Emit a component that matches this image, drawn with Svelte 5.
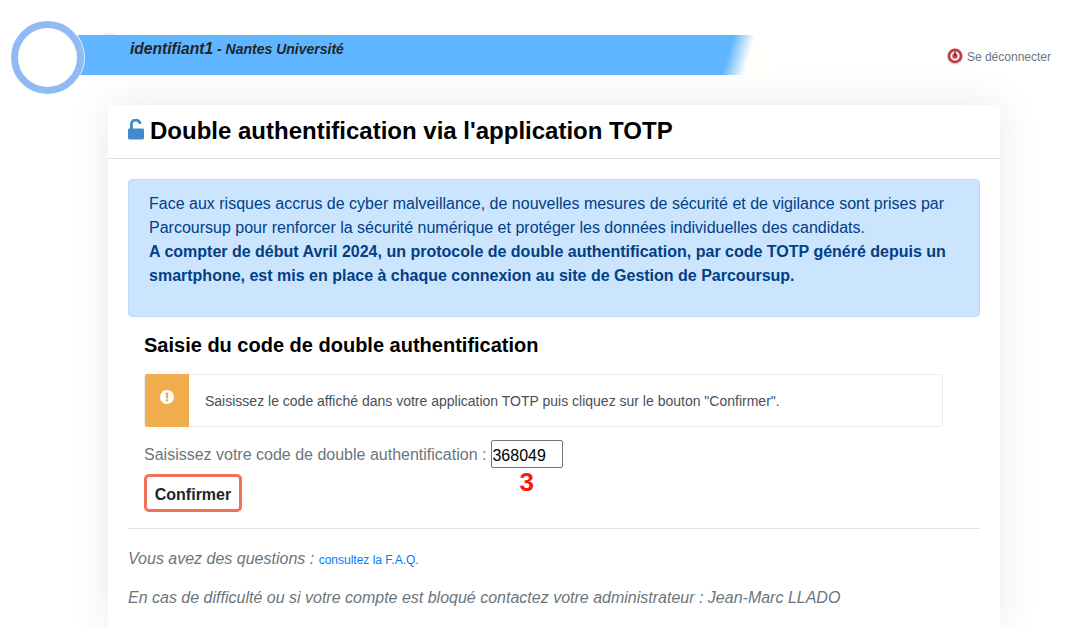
<script lang="ts">
  // TOTP double authentication page
  let code = $state('368049');
</script>

<header class="topbar">
  <div class="bump"></div>
  <div class="logo"></div>
  <div class="banner">
    <span class="ident"><em class="login">identifiant1</em> - Nantes Université</span>
  </div>
  <a class="logout" href="#top">
    <svg width="16" height="17" viewBox="0 0 16 17">
      <circle cx="8" cy="8.6" r="7.9" fill="#d8d2d2" />
      <circle cx="8" cy="7.9" r="7.3" fill="#bd3a3e" />
      <circle cx="8" cy="8" r="3.7" fill="#c9484c" stroke="#fbf0f0" stroke-width="2" />
      <path d="M8 3.4v4.8" stroke="#8f1a1f" stroke-width="1.6" />
    </svg>
    Se déconnecter
  </a>
</header>

<main class="card">
  <div class="card-head">
    <h1>
      <svg class="lock" width="16" height="21" viewBox="0 0 16 21">
        <path d="M3.4 10V5.4a4.4 4.1 0 0 1 8.8-.6" fill="none" stroke="#428bca" stroke-width="2.8" />
        <rect x="0" y="9.6" width="16" height="10.8" rx="1.3" fill="#428bca" />
      </svg>
      Double authentification via l'application TOTP
    </h1>
  </div>
  <div class="card-body">
    <div class="alert">
      Face aux risques accrus de cyber malveillance, de nouvelles mesures de sécurité et de vigilance sont prises par Parcoursup pour renforcer la sécurité numérique et protéger les données individuelles des candidats.<br />
      <strong>A compter de début Avril 2024, un protocole de double authentification, par code TOTP généré depuis un smartphone, est mis en place à chaque connexion au site de Gestion de Parcoursup.</strong>
    </div>

    <section class="saisie">
      <h2>Saisie du code de double authentification</h2>
      <div class="callout">
        <div class="callout-icon">
          <svg width="14" height="14" viewBox="0 0 14 14">
            <circle cx="7" cy="7" r="7" fill="#fff" />
            <rect x="5.8" y="2.6" width="2.4" height="5.8" rx="0.6" fill="#f0ad4e" />
            <rect x="5.8" y="9.4" width="2.4" height="2.1" fill="#f0ad4e" />
          </svg>
        </div>
        <p>Saisissez le code affiché dans votre application TOTP puis cliquez sur le bouton "Confirmer".</p>
      </div>
      <div class="code-row">
        <label for="code">Saisissez votre code de double authentification :</label>
        <span class="code-wrap">
          <input id="code" type="text" bind:value={code} />
          <span class="step">3</span>
        </span>
      </div>
      <button type="button" class="confirm">Confirmer</button>
    </section>

    <hr />

    <p class="help first">Vous avez des questions : <a href="#top">consultez la F.A.Q.</a></p>
    <p class="help">En cas de difficulté ou si votre compte est bloqué contactez votre administrateur : Jean-Marc LLADO</p>
  </div>
</main>

<style>
  :global(body) {
    margin: 0;
    background: #fff;
    font-family: "Liberation Sans", Arial, sans-serif;
    height: 628px;
    overflow: hidden;
  }

  .topbar {
    position: relative;
    height: 105px;
    box-sizing: border-box;
    padding-top: 35px;
    display: flex;
    align-items: flex-start;
  }

  .bump {
    position: absolute;
    left: 102px;
    top: 33px;
    width: 16px;
    height: 6px;
    border-radius: 50%;
    background: #e6effa;
  }

  .logo {
    position: absolute;
    left: 11px;
    top: 21px;
    width: 59px;
    height: 59px;
    border: 7px solid #8fbaf3;
    border-radius: 50%;
    background: #fff;
    box-shadow: 0 0 0 1px rgba(255, 255, 255, 0.8);
    z-index: 1;
  }

  .banner {
    position: relative;
    margin-left: 78px;
    width: 692px;
    height: 40px;
    box-sizing: border-box;
    padding: 4px 0 0 52px;
    background: linear-gradient(106.7deg, #5fb5ff 0, #5fb5ff 628px, #fffffb 649px);
  }

  .ident {
    font-size: 14px;
    line-height: 20px;
    font-style: italic;
    font-weight: 700;
    color: #212529;
  }

  .login {
    font-size: 15.6px;
  }

  .logout {
    margin: 13px 27px 0 auto;
    display: flex;
    align-items: center;
    gap: 4px;
    font-size: 12px;
    color: #6c757d;
    text-decoration: none;
  }

  .card {
    height: 523px;
    box-sizing: border-box;
    margin: 0 78px 0 108px;
    background: #fff;
    box-shadow: 0 0 40px rgba(0, 0, 0, 0.09);
  }

  .card-head {
    height: 54px;
    box-sizing: border-box;
    border-bottom: 1px solid #dfdfdf;
    padding: 0 20px;
  }

  h1 {
    margin: 0;
    padding-top: 11px;
    font-size: 24px;
    line-height: 29px;
    font-weight: 700;
    color: #000;
    display: flex;
    gap: 6px;
  }

  .lock {
    margin-top: 3px;
  }

  .card-body {
    padding: 20px 20px 0;
  }

  .alert {
    height: 138px;
    box-sizing: border-box;
    padding: 12px 20px;
    background: #cce5ff;
    border: 1px solid #b8daff;
    border-radius: 4px;
    color: #004085;
    font-size: 16px;
    line-height: 24px;
  }

  .saisie {
    padding: 16px;
  }

  h2 {
    margin: 0 0 17px;
    font-size: 20px;
    line-height: 24px;
    font-weight: 700;
    color: #000;
  }

  .callout {
    width: 799px;
    height: 53px;
    box-sizing: border-box;
    display: flex;
    border: 1px solid #e7ebf5;
    border-radius: 3px;
  }

  .callout-icon {
    width: 44px;
    margin: -1px 0;
    background: #f0ad4e;
    border-radius: 2px 0 0 2px;
    display: flex;
    justify-content: center;
    padding-top: 16px;
    box-sizing: border-box;
  }

  .callout p {
    margin: 0;
    padding: 16px 16px 0;
    font-size: 14px;
    line-height: 20px;
    color: #495057;
  }

  .code-row {
    margin-top: 13px;
    display: flex;
    align-items: center;
    gap: 5px;
    font-size: 16px;
    color: #6c757d;
  }

  label {
    padding-top: 2px;
  }

  .code-wrap {
    position: relative;
    display: block;
  }

  input {
    display: block;
    width: 72px;
    height: 28px;
    box-sizing: border-box;
    padding: 4px 0 0;
    border: 1px solid #767676;
    border-radius: 2px;
    font: 16px "Liberation Sans", Arial, sans-serif;
    color: #000;
  }

  .step {
    position: absolute;
    left: 28px;
    top: 27px;
    font-size: 26px;
    line-height: 30px;
    font-weight: 700;
    color: #fb1a0c;
  }

  .confirm {
    display: block;
    margin-top: 6px;
    width: 98px;
    height: 38px;
    padding: 4px 0 0;
    background: #fff;
    border: 3px solid #ee7356;
    border-radius: 5px;
    font: 700 16px "Liberation Sans", Arial, sans-serif;
    color: #212529;
  }

  hr {
    margin: 0;
    border: 0;
    border-top: 1px solid #dfdfdf;
  }

  .help {
    margin: 0 0 14px;
    font-size: 16px;
    line-height: 24px;
    font-style: italic;
    color: #6c757d;
  }

  .first {
    margin-top: 18px;
  }

  .help a {
    font-size: 12px;
    font-style: normal;
    color: #007bff;
    text-decoration: none;
  }
</style>
